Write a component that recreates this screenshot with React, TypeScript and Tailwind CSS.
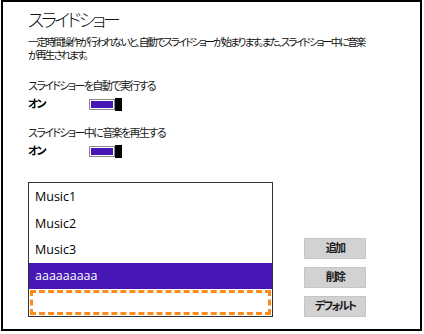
import { useState } from 'react';

const JP = "font-['Segoe_UI','Noto_Sans','Noto_Sans_CJK_JP',sans-serif] [font-feature-settings:'palt']";

function Toggle({ on }: { on: boolean }) {
  return (
    <div className="relative flex h-[11px] w-[33px] items-stretch">
      <div className="flex flex-1 border border-[#8a8a8a] bg-white p-px">
        <div className={on ? 'flex-1 bg-[#4617b4]' : 'flex-1 bg-white'} />
      </div>
      <div className="-my-px w-[7px] bg-black" />
    </div>
  );
}

function Setting({ label, on }: { label: string; on: boolean }) {
  return (
    <div className="flex flex-col">
      <div className="text-[11px] leading-[14px] tracking-[-1.6px] text-[#1a1a1a]">{label}</div>
      <div className="mt-[4px] flex items-center">
        <span className="w-[61px] text-[11px] leading-[14px] font-bold tracking-[-2px] text-black">{on ? 'オン' : 'オフ'}</span>
        <Toggle on={on} />
      </div>
    </div>
  );
}

const TRACKS = ['Music1', 'Music2', 'Music3', 'aaaaaaaaa'];

export default function App() {
  const [selected] = useState(3);

  return (
    <div className={`h-[334px] w-[424px] bg-white ${JP}`}>
      <div className="ml-px flex h-[331px] w-[421px] flex-col border-2 border-black pl-[25px] pt-[6px]">
        {/* Header */}
        <h1 className="text-[18px] leading-[24px] font-light tracking-[-2.8px] text-[#111]">スライドショー</h1>
        <p className="mt-[4px] whitespace-nowrap text-[10.5px] leading-[13px] tracking-[-2px] text-[#111]">
          一定時間操作が行われないと、自動でスライドショーが始まります。また、スライドショー中に音楽
          <br />
          が再生されます。
        </p>

        {/* Settings */}
        <div className="mt-[17px] flex flex-col gap-[15px]">
          <Setting label="スライドショーを自動で実行する" on />
          <Setting label="スライドショー中に音楽を再生する" on />
        </div>

        {/* Music list + buttons */}
        <div className="mt-[24px] flex items-end gap-[31px]">
          <div className="flex w-[245px] flex-col border border-[#333] bg-white font-['Segoe_UI','Open_Sans','Noto_Sans',sans-serif]">
            {TRACKS.map((t, i) => (
              <div
                key={t}
                className={
                  i === selected
                    ? 'flex h-[26px] items-center bg-[#4617b4] px-[6px] pt-[2px] text-[12.5px] text-white'
                    : 'flex h-[26.5px] items-center px-[6px] pt-[3px] text-[12.5px] text-black'
                }
              >
                {t}
              </div>
            ))}
            <div className="h-[27px] p-px">
              <div className="h-full border-[3px] border-dashed border-[#ff8c1a]" />
            </div>
          </div>

          <div className="flex flex-col gap-[8px]">
            {['追加', '削除', 'デフォルト'].map((b) => (
              <button
                key={b}
                className="flex h-[21px] w-[62px] items-center justify-center border border-[#c6c6c6] bg-[#d2d2d2] text-[11px] font-bold tracking-[-1.8px] text-[#1a1a1a]"
              >
                {b}
              </button>
            ))}
          </div>
        </div>
      </div>
    </div>
  );
}
